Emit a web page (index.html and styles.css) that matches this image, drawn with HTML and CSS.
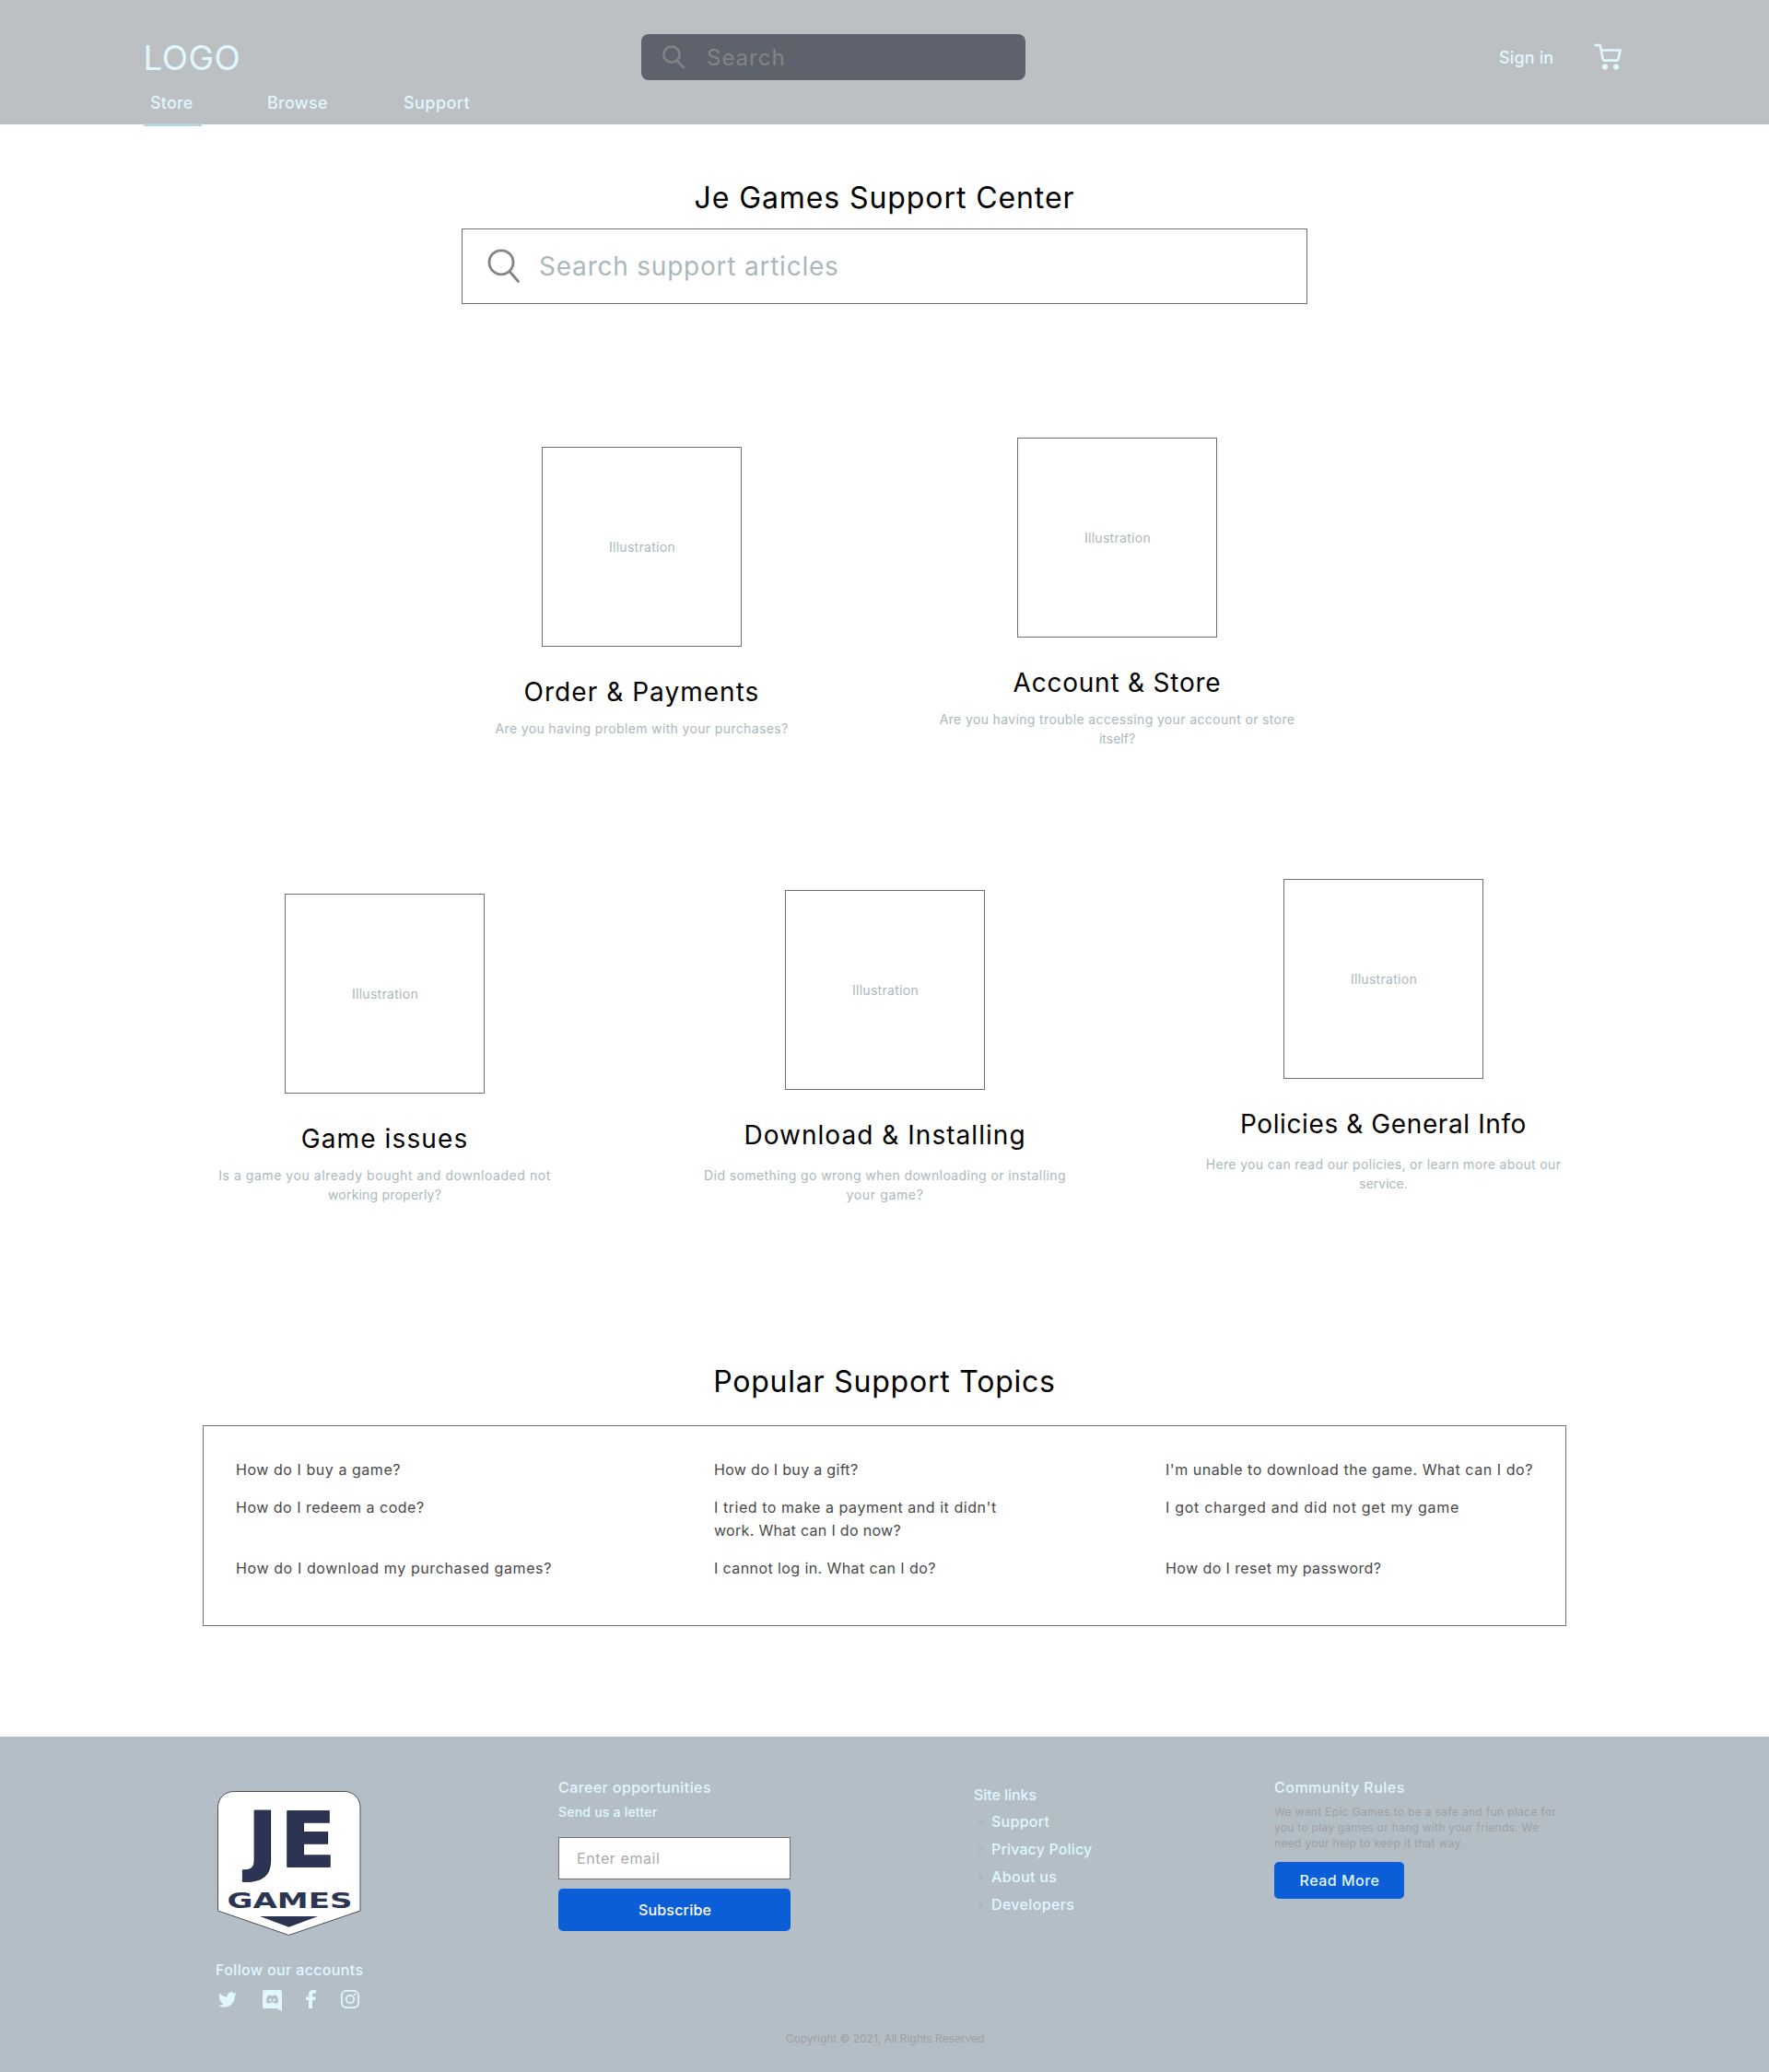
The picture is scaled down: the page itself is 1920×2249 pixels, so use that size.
FILE: index.html
```
<!DOCTYPE html>
<html lang="en">
<head>
<meta charset="utf-8">
<title>Je Games Support Center</title>
<link rel="stylesheet" href="styles.css">
</head>
<body>
<header class="header">
  <div class="header-top">
    <a class="brand">LOGO</a>
    <div class="header-search">
      <svg width="26" height="26" viewBox="0 0 26 26" fill="none" stroke="#848484" stroke-width="2.6" stroke-linecap="round"><circle cx="11" cy="10.2" r="8.6"/><path d="M17 17l6.8 7"/></svg>
      <span>Search</span>
    </div>
    <a class="sign-in">Sign in</a>
    <svg class="cart" width="30" height="30" viewBox="0 0 30 30" fill="none" stroke="#e0f7ff" stroke-width="2.6" stroke-linecap="round" stroke-linejoin="round"><path d="M1.6 2h5l3.1 15.200c.2 1 .8 1.400 1.700 1.400h13.300c.9 0 1.500-.5 1.700-1.400l2.100-9.700H7.800"/><circle cx="12" cy="25.500" r="3.100" fill="#e0f7ff" stroke="none"/><circle cx="24" cy="25.500" r="3.100" fill="#e0f7ff" stroke="none"/></svg>
  </div>
  <nav class="nav">
    <a class="nav-link active t15">Store</a>
    <a class="nav-link t25">Browse</a>
    <a class="nav-link t45">Support</a>
  </nav>
</header>

<main>
  <section class="hero">
    <h1 class="section-title t90">Je Games Support Center</h1>
    <div class="support-search">
      <svg width="36" height="38" viewBox="0 0 36 38" fill="none" stroke="#848484" stroke-width="2.800" stroke-linecap="round"><circle cx="15" cy="14.800" r="13"/><path d="M24 24.500l9.500 11"/></svg>
      <span class="t80">Search support articles</span>
    </div>
  </section>

  <section class="cards cards-two">
    <article class="card drop-10">
      <div class="illustration">Illustration</div>
      <h2 class="card-title t105">Order &amp; Payments</h2>
      <p class="card-text"><span class="t37">Are you having problem with your purchases?</span></p>
    </article>
    <article class="card">
      <div class="illustration">Illustration</div>
      <h2 class="card-title t80">Account &amp; Store</h2>
      <p class="card-text"><span class="t37">Are you having trouble accessing your account or store</span><br>itself?</p>
    </article>
  </section>

  <section class="cards cards-three">
    <article class="card drop-16">
      <div class="illustration">Illustration</div>
      <h2 class="card-title t115">Game issues</h2>
      <p class="card-text"><span class="t56">Is a game you already bought and downloaded not</span><br><span class="t20">working properly?</span></p>
    </article>
    <article class="card roomy drop-12">
      <div class="illustration">Illustration</div>
      <h2 class="card-title t105">Download &amp; Installing</h2>
      <p class="card-text"><span class="t41">Did something go wrong when downloading or installing</span><br><span class="t65">your game?</span></p>
    </article>
    <article class="card roomy">
      <div class="illustration">Illustration</div>
      <h2 class="card-title t62">Policies &amp; General Info</h2>
      <p class="card-text"><span class="t35">Here you can read our policies, or learn more about our</span><br>service.</p>
    </article>
  </section>

  <section class="topics">
    <h1 class="section-title t80">Popular Support Topics</h1>
    <div class="topics-grid">
      <a class="t56">How do I buy a game?</a>
      <a class="t31">How do I buy a gift?</a>
      <a class="t56">I'm unable to download the game. What can I do?</a>
      <a class="t50">How do I redeem a code?</a>
      <a><span class="t56">I tried to make a payment and it didn't</span><br><span class="t31">work. What can I do now?</span></a>
      <a class="t72">I got charged and did not get my game</a>
      <a class="t60">How do I download my purchased games?</a>
      <a class="t41">I cannot log in. What can I do?</a>
      <a class="t41">How do I reset my password?</a>
    </div>
  </section>
</main>

<footer class="footer">
  <div class="footer-columns">
    <div class="footer-brand">
      <svg class="logo" width="158" height="158" viewBox="0 0 158 158">
        <path d="M1.500 18.500A17 17 0 0 1 18.500 1.500H139a17 17 0 0 1 17 17V131L78.500 157.500 1.500 131Z" fill="#fff" stroke="#4a4d50"/>
        <g class="logo-shade"><text x="34.300" y="83.300" textLength="32" lengthAdjust="spacingAndGlyphs">J</text><text x="69.800" y="83.300" textLength="59.500" lengthAdjust="spacingAndGlyphs">E</text></g>
        <g class="logo-initials"><text x="33.500" y="82.500" textLength="32" lengthAdjust="spacingAndGlyphs">J</text><text x="69" y="82.500" textLength="59.500" lengthAdjust="spacingAndGlyphs">E</text></g>
        <text class="logo-name" x="11.500" y="128.300" textLength="136" lengthAdjust="spacingAndGlyphs">GAMES</text>
        <path d="M47 137H110L78.500 148.800Z" fill="#2b3553"/>
      </svg>
      <h3 class="footer-title t38">Follow our accounts</h3>
      <div class="social">
        <svg class="twitter" width="20" height="17" viewBox="0 0 24 20"><path fill="#e0f7ff" d="M23.950 2.570a10 10 0 0 1-2.820.770 4.960 4.960 0 0 0 2.160-2.720c-.950.560-2.010.960-3.130 1.180a4.920 4.920 0 0 0-8.380 4.480C7.690 6.100 4.070 4.130 1.640 1.160a4.820 4.820 0 0 0-.670 2.480c0 1.710.870 3.210 2.190 4.100a4.900 4.900 0 0 1-2.230-.620v.060a4.920 4.920 0 0 0 3.950 4.830 5 5 0 0 1-2.210.080 4.940 4.940 0 0 0 4.600 3.420A9.870 9.870 0 0 1 0 17.540a14 14 0 0 0 7.550 2.210c9.050 0 14-7.500 14-13.980 0-.210 0-.420-.020-.630a9.940 9.940 0 0 0 2.420-2.570z"/></svg>
        <svg class="discord" width="21" height="24" viewBox="0 0 21 24"><path fill="#e0f7ff" d="M2 0h17a2 2 0 0 1 2 2v21.500L16 20H2a2 2 0 0 1-2-2V2a2 2 0 0 1 2-2z"/><path fill="#b4bec7" d="M6 5.800l2.500-.3.600.8h2.800l.6-.8 2.500.3c1.600 2.300 2.300 4.800 2 7.500-1.100 1-2.200 1.500-3.400 1.600l-.9-1.400H8.300l-.9 1.400C6.200 14.800 5.100 14.300 4 13.300c-.3-2.700.4-5.200 2-7.500z"/><circle cx="8.300" cy="10.800" r="1.300" fill="#e0f7ff"/><circle cx="12.700" cy="10.800" r="1.300" fill="#e0f7ff"/></svg>
        <svg class="facebook" width="11" height="20" viewBox="0 0 11 20"><path fill="#e0f7ff" d="M3 20v-9H0V7.500h3V5c0-3.200 1.700-5 4.700-5H11v3.400H8.900C7.500 3.400 7 4 7 5.300v2.200h3.800l-.5 3.500H7v9z"/></svg>
        <svg class="instagram" width="20" height="20" viewBox="0 0 20 20" fill="none" stroke="#e0f7ff" stroke-width="1.800"><rect x=".9" y=".9" width="18.200" height="18.200" rx="5"/><circle cx="10" cy="10" r="4.200"/><circle cx="15.300" cy="4.700" r="1.200" fill="#e0f7ff" stroke="none"/></svg>
      </div>
    </div>
    <div class="newsletter">
      <h3 class="footer-title t41">Career opportunities</h3>
      <p class="letter">Send us a letter</p>
      <div class="email t58">Enter email</div>
      <div class="button subscribe">Subscribe</div>
    </div>
    <div class="site-links">
      <h3 class="footer-title">Site links</h3>
      <ul>
        <li class="t25">Support</li>
        <li class="t15">Privacy Policy</li>
        <li class="t35">About us</li>
        <li class="t35">Developers</li>
      </ul>
    </div>
    <div class="community">
      <h3 class="footer-title t50">Community Rules</h3>
      <p class="rules"><span class="t35">We want Epic Games to be a safe and fun place for</span><br><span class="t28">you to play games or hang with your friends. We</span><br><span class="t31">need your help to keep it that way.</span></p>
      <div class="button read-more t50">Read More</div>
    </div>
  </div>
  <p class="copyright">Copyright © 2021, All Rights Reserved</p>
</footer>
</body>
</html>
```
FILE: styles.css
```
* { box-sizing: border-box; }
body, h1, h2, h3, p, ul { margin: 0; padding: 0; }
body { font-family: Inter, "Liberation Sans", sans-serif; font-weight: 400; background: #fff; color: #000; }
h1, h2, h3 { font-weight: 400; }
svg { display: block; flex: none; }

/* Letter spacing steps, in hundredths of a pixel */
.t15 { letter-spacing: .15px; }
.t20 { letter-spacing: .2px; }
.t25 { letter-spacing: .26px; }
.t28 { letter-spacing: .28px; }
.t31 { letter-spacing: .31px; }
.t35 { letter-spacing: .345px; }
.t37 { letter-spacing: .36px; }
.t38 { letter-spacing: .36px; }
.t41 { letter-spacing: .41px; }
.t45 { letter-spacing: .45px; }
.t50 { letter-spacing: .5px; }
.t56 { letter-spacing: .55px; }
.t58 { letter-spacing: .58px; }
.t60 { letter-spacing: .6px; }
.t62 { letter-spacing: .6px; }
.t65 { letter-spacing: .65px; }
.t72 { letter-spacing: .715px; }
.t80 { letter-spacing: .78px; }
.t90 { letter-spacing: .91px; }
.t105 { letter-spacing: 1.04px; }
.t115 { letter-spacing: 1.12px; }

/* Header */
.header { height: 135px; padding-top: 37px; background: #bcc0c3; color: #e0f7ff; }
.header-top { display: flex; height: 50px; align-items: center; padding-left: 155.500px; }
.brand { width: 540.500px; padding-top: 2px; font-size: 37px; line-height: 50px; letter-spacing: .4px; }
.header-search { display: flex; align-items: center; gap: 23px; width: 416.500px; height: 50px; padding-left: 22px; border-radius: 8px; background: #5e626d; color: #848484; font-size: 24px; letter-spacing: .99px; }
.header-search span { padding-top: 1px; }
.sign-in { margin-left: 514.500px; width: 103px; padding-top: 1px; font-size: 18px; font-weight: 500; letter-spacing: .14px; }
.nav { display: grid; grid-template-columns: 127px 148px auto; padding: 13px 0 0 163px; }
.nav-link { position: relative; font-size: 18px; line-height: 24px; font-weight: 500; }
.active::after { content: ""; position: absolute; left: -7.500px; top: 34px; width: 63px; height: 3px; background: #b0d5df; }

/* Search hero */
.hero { padding-top: 56px; }
.section-title { font-size: 32px; line-height: 48px; text-align: center; }
.support-search { display: flex; align-items: center; width: 918px; height: 82px; margin: 9px auto 0; padding-left: 27px; gap: 20px; border: 1px solid #707070; color: #abb8bb; font-size: 28px; }

/* Category cards */
.cards { display: flex; align-items: flex-start; }
.cards-two { margin-top: 145px; height: 479px; padding-left: 496.500px; gap: 116px; }
.cards-two .card { width: 400px; }
.cards-three { height: 522px; padding-left: 207.500px; gap: 121px; }
.cards-three .card { width: 420px; }
.cards-three .card:first-child { margin-right: 2px; }
.card { flex: none; text-align: center; }
.drop-10 { margin-top: 10px; }
.drop-12 { margin-top: 12px; }
.drop-16 { margin-top: 16px; }
.illustration { display: flex; align-items: center; justify-content: center; width: 217px; height: 217px; margin: 0 auto; padding-left: 1px; border: 1px solid #707070; color: #abb8bb; font-size: 14px; letter-spacing: .3px; }
.card-title { margin-top: 28px; font-size: 28px; line-height: 42px; }
.card-text { margin-top: 8px; color: #abb8bb; font-size: 14px; line-height: 21px; }
.roomy .card-text { margin-top: 12px; }

/* Popular topics */
.topics-grid { display: grid; grid-template-columns: 519px 490px auto; row-gap: 16px; align-content: start; width: 1480px; height: 218px; margin: 23px auto 0; padding: 35px 0 0 35px; border: 1px solid #707070; color: #484848; font-size: 16px; line-height: 25px; white-space: nowrap; }

/* Footer */
.footer { height: 364px; margin-top: 120px; padding-top: 43px; background: #b4bec7; color: #e0f7ff; }
.footer-columns { display: grid; grid-template-columns: 372px 451px 326px auto; height: 276px; padding-left: 234px; }
.footer-title { font-size: 16px; line-height: 24px; font-weight: 500; }
.logo { margin: 15px 0 0 .500px; }
.logo-initials, .logo-shade { font: 700 82px "DejaVu Sans", sans-serif; fill: #2b3553; stroke: #2b3553; stroke-width: 1.500px; }
.logo-shade { fill: #10131f; stroke: #10131f; }
.logo-name { font: 700 23px "DejaVu Sans", sans-serif; fill: #2b3553; }
.footer-brand .footer-title { margin-top: 25px; }
.social { display: flex; align-items: flex-start; margin-top: 10px; padding-left: 3px; }
.twitter { margin-top: 2px; }
.discord { margin-left: 28px; }
.facebook { margin-left: 26px; }
.instagram { margin-left: 27px; }
.letter { margin-top: 5px; font-size: 14px; line-height: 20px; font-weight: 500; letter-spacing: .22px; }
.email { display: flex; align-items: center; width: 252px; height: 46px; margin-top: 17px; padding-left: 19px; border: 1px solid #707070; background: #fff; color: #a9a9a9; font-size: 16px; }
.button { display: flex; align-items: center; justify-content: center; padding-left: 1px; border-radius: 5px; background: #0b5ed7; color: #fff; font-size: 16px; font-weight: 500; }
.subscribe { width: 252px; height: 46px; margin-top: 10px; letter-spacing: .19px; }
.site-links { padding-top: 8px; }
.site-links .footer-title { letter-spacing: -.050px; }
.site-links ul { margin-top: 2px; list-style: none; }
.site-links li { display: flex; align-items: center; gap: 9px; padding-left: 5px; font-size: 16px; line-height: 30px; font-weight: 500; }
.site-links li::before { content: ""; width: 5px; height: 5px; border-radius: 50%; background: #abb8bd; }
.rules { margin-top: 6px; color: #a0a0a0; font-size: 12px; line-height: 17px; }
.read-more { width: 141px; height: 40px; margin-top: 12px; color: #e0f7ff; }
.copyright { padding-left: 1px; color: #a0a0a0; font-size: 12px; line-height: 18px; letter-spacing: -.040px; text-align: center; }
```
